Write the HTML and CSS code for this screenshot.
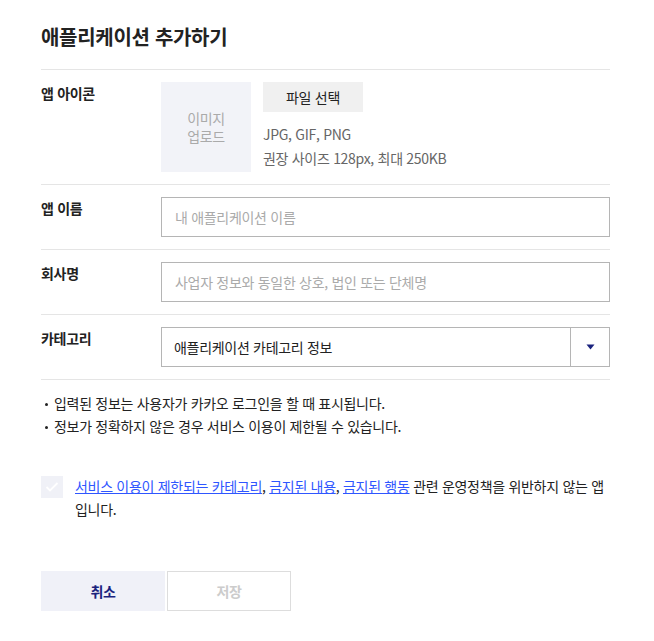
FILE: index.html
```html
<!DOCTYPE html>
<html lang="ko">
<head>
<meta charset="utf-8">
<title>애플리케이션 추가하기</title>
<link rel="stylesheet" href="styles.css">
</head>
<body>
<div class="page">
  <h1 class="title">애플리케이션 추가하기</h1>

  <div class="row">
    <div class="label">앱 아이콘</div>
    <div class="icon-field">
      <div class="upload">이미지<br>업로드</div>
      <div class="file-info">
        <button class="file-btn" type="button">파일 선택</button>
        <p class="hint">JPG, GIF, PNG<br>권장 사이즈 128px, 최대 250KB</p>
      </div>
    </div>
  </div>

  <div class="row">
    <div class="label">앱 이름</div>
    <input class="text-input" type="text" placeholder="내 애플리케이션 이름">
  </div>

  <div class="row">
    <div class="label">회사명</div>
    <input class="text-input" type="text" placeholder="사업자 정보와 동일한 상호, 법인 또는 단체명">
  </div>

  <div class="row">
    <div class="label">카테고리</div>
    <div class="select">
      <span class="select-value">애플리케이션 카테고리 정보</span>
      <span class="select-arrow"><svg width="9" height="6" viewBox="0 0 9 6"><path d="M0.5 0.5h8L4.5 5.5z" fill="#1a237e"/></svg></span>
    </div>
  </div>

  <ul class="notes">
    <li>입력된 정보는 사용자가 카카오 로그인을 할 때 표시됩니다.</li>
    <li>정보가 정확하지 않은 경우 서비스 이용이 제한될 수 있습니다.</li>
  </ul>

  <div class="agree">
    <span class="checkbox"><svg width="14" height="10" viewBox="0 0 14 10"><path d="M1.5 5l3.5 3.5 7.5-7.5" fill="none" stroke="#fff" stroke-width="1.8"/></svg></span>
    <p class="agree-text"><a href="#">서비스 이용이 제한되는 카테고리</a>, <a href="#">금지된 내용</a>, <a href="#">금지된 행동</a> 관련 운영정책을 위반하지 않는 앱입니다.</p>
  </div>

  <div class="actions">
    <button class="btn btn-cancel" type="button">취소</button>
    <button class="btn btn-save" type="button">저장</button>
  </div>
</div>
</body>
</html>
```

FILE: styles.css
```css
* { box-sizing: border-box; }
body {
  margin: 0;
  background: #fff;
  font-family: "Noto Sans CJK KR", "Noto Sans", sans-serif;
  color: #222;
  letter-spacing: -0.3px;
}
.page {
  width: 654px;
  padding: 22px 44px 0 41px;
}
.title {
  margin: 0;
  font-size: 20px;
  font-weight: 700;
  line-height: 30px;
  padding-bottom: 17px;
  border-bottom: 1px solid #e5e5e5;
  letter-spacing: -0.3px;
}
.row {
  display: grid;
  grid-template-columns: 120px 1fr;
  padding: 12px 0;
  border-bottom: 1px solid #e5e5e5;
}
.label {
  font-size: 14px;
  font-weight: 700;
  line-height: 22px;
}
.icon-field {
  display: flex;
  gap: 12px;
}
.upload {
  width: 90px;
  height: 90px;
  background: #f2f3f8;
  color: #aaa;
  font-size: 14px;
  line-height: 18px;
  display: flex;
  align-items: center;
  justify-content: center;
  text-align: center;
}
.file-info {
  display: flex;
  flex-direction: column;
  align-items: flex-start;
}
.file-btn {
  width: 100px;
  height: 30px;
  border: 0;
  background: #f0f0f0;
  font-family: inherit;
  font-size: 14px;
  letter-spacing: inherit;
  color: #222;
  padding: 0;
}
.hint {
  margin: 10px 0 0;
  font-size: 14px;
  line-height: 24px;
  color: #666;
}
.text-input {
  width: 100%;
  height: 40px;
  border: 1px solid #b5b5b5;
  padding: 0 13px;
  font-family: inherit;
  font-size: 14px;
  letter-spacing: inherit;
  color: #222;
  outline: none;
}
.text-input::placeholder { color: #aaa; }
.select {
  display: flex;
  height: 40px;
  border: 1px solid #b5b5b5;
  font-size: 14px;
}
.select-value {
  flex: 1;
  padding: 0 12px;
  display: flex;
  align-items: center;
  color: #222;
}
.select-arrow {
  width: 39px;
  border-left: 1px solid #b5b5b5;
  display: flex;
  align-items: center;
  justify-content: center;
}
.notes {
  list-style: none;
  margin: 0;
  padding: 12px 0 0;
  font-size: 14px;
  line-height: 23px;
}
.notes li {
  position: relative;
  padding-left: 13px;
}
.notes li::before {
  content: "";
  position: absolute;
  left: 4px;
  top: 11px;
  width: 3px;
  height: 3px;
  border-radius: 50%;
  background: #222;
}
.agree {
  display: flex;
  gap: 12px;
  margin-top: 37px;
  align-items: flex-start;
}
.checkbox {
  flex: none;
  width: 22px;
  height: 22px;
  margin-top: 0.5px;
  background: #f0f1f7;
  display: flex;
  align-items: center;
  justify-content: center;
}
.agree-text {
  margin: 0;
  font-size: 14px;
  line-height: 23px;
}
.agree-text a {
  color: #2f56ff;
  text-decoration: underline;
}
.actions {
  display: flex;
  gap: 2px;
  margin-top: 50px;
}
.btn {
  width: 124px;
  height: 40px;
  font-family: inherit;
  font-size: 14px;
  letter-spacing: inherit;
  font-weight: 700;
  padding: 0;
}
.btn-cancel {
  background: #f0f1f8;
  border: 0;
  color: #1a237e;
}
.btn-save {
  background: #fff;
  border: 1px solid #ddd;
  color: #ccc;
}
```
